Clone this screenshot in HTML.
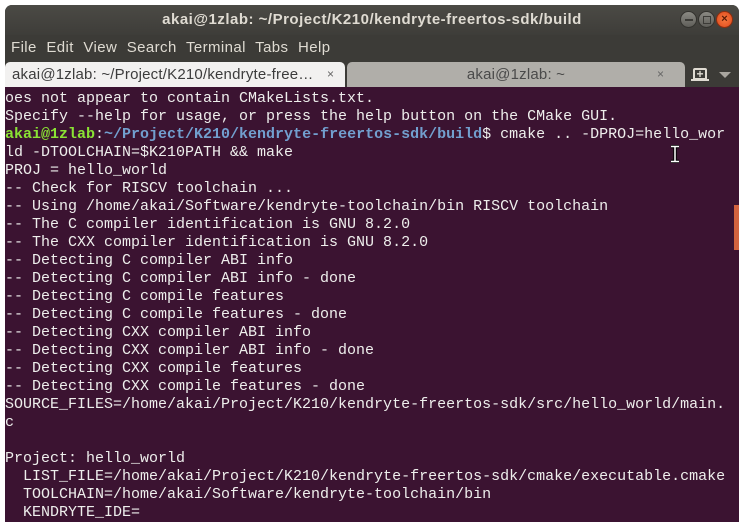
<!DOCTYPE html>
<html><head><meta charset="utf-8"><style>
*{margin:0;padding:0;box-sizing:border-box}
body{width:748px;height:530px;background:#fff;position:relative;overflow:hidden;font-family:"Liberation Sans","DejaVu Sans",sans-serif}
.win{position:absolute;left:5px;top:5px;width:734px;height:517px;background:#3c3b37;border-radius:7px 7px 0 0;overflow:hidden}
.title{position:absolute;left:0;top:0;width:734px;height:30px;background:linear-gradient(#4b4a45,#3e3d39);color:#dfdbd2;font-weight:bold;font-size:15px;letter-spacing:0.5px;text-align:center;line-height:30px}
.btn{position:absolute;top:6px;width:17px;height:17px;border-radius:50%;background:linear-gradient(#8a8983,#5f5e59);border:1px solid #33322e}
.menu{position:absolute;left:0;top:30px;width:734px;height:25px;background:#3c3b37;color:#dfdbd2;font-size:15px;letter-spacing:0.4px;line-height:25px;padding-left:6px;word-spacing:5px}
.tabs{position:absolute;left:0;top:55px;width:734px;height:27px;background:#3c3b37}
.tab{position:absolute;top:2px;height:25px;border-radius:5px 5px 0 0;font-size:15px;letter-spacing:0.2px;line-height:25px;color:#3c3c3c}
.term{position:absolute;left:0;top:82px;width:734px;height:435px;background:#3b1331;color:#eeeeec;font-family:"Liberation Mono","DejaVu Sans Mono",monospace;font-size:15px;line-height:18px;white-space:pre;padding-top:3px}
.g{color:#8ae234;font-weight:bold}.b{color:#729fcf;font-weight:bold}
</style></head><body>
<div class="win">
 <div class="title">akai@1zlab: ~/Project/K210/kendryte-freertos-sdk/build</div>
 <div class="btn" style="left:675px"><div style="position:absolute;left:4px;top:7px;width:8px;height:2px;background:#3c3b37"></div></div>
 <div class="btn" style="left:693px"><div style="position:absolute;left:4px;top:4px;width:8px;height:8px;border:1.5px solid #3c3b37"></div></div>
 <div class="btn" style="left:711px;background:radial-gradient(#f5793f,#e0491c);border-color:#8a2e10;color:#5a1a05;font-size:11px;line-height:15px;text-align:center;font-weight:bold">×</div>
 <div class="menu">File Edit View Search Terminal Tabs Help</div>
 <div class="tabs">
  <div class="tab" style="left:0;width:340px;background:#f2f1f0;padding-left:7px">akai@1zlab: ~/Project/K210/kendryte-free… <span style="position:absolute;left:322px;font-size:12px;color:#666">×</span></div>
  <div class="tab" style="left:342px;width:338px;background:#b0aea9;text-align:center;color:#4a4a4a">akai@1zlab: ~<span style="position:absolute;left:310px;font-size:12px;color:#666">×</span></div>
  <div style="position:absolute;left:688px;top:8px;width:14px;height:12px;border:2px solid #dfdbd2;border-radius:2px 2px 0 0;color:#dfdbd2;font-size:12px;line-height:8px;text-align:center;font-weight:bold">+</div>
  <div style="position:absolute;left:686px;top:19px;width:18px;height:2px;background:#dfdbd2"></div>
  <div style="position:absolute;left:714px;top:12px;width:0;height:0;border-left:6px solid transparent;border-right:6px solid transparent;border-top:6px solid #a9a69f"></div>
 </div>
 <div class="term">oes not appear to contain CMakeLists.txt.
Specify --help for usage, or press the help button on the CMake GUI.
<span class="g">akai@1zlab</span>:<span class="b">~/Project/K210/kendryte-freertos-sdk/build</span>$ cmake .. -DPROJ=hello_wor
ld -DTOOLCHAIN=$K210PATH &amp;&amp; make
PROJ = hello_world
-- Check for RISCV toolchain ...
-- Using /home/akai/Software/kendryte-toolchain/bin RISCV toolchain
-- The C compiler identification is GNU 8.2.0
-- The CXX compiler identification is GNU 8.2.0
-- Detecting C compiler ABI info
-- Detecting C compiler ABI info - done
-- Detecting C compile features
-- Detecting C compile features - done
-- Detecting CXX compiler ABI info
-- Detecting CXX compiler ABI info - done
-- Detecting CXX compile features
-- Detecting CXX compile features - done
SOURCE_FILES=/home/akai/Project/K210/kendryte-freertos-sdk/src/hello_world/main.
c

Project: hello_world
  LIST_FILE=/home/akai/Project/K210/kendryte-freertos-sdk/cmake/executable.cmake
  TOOLCHAIN=/home/akai/Software/kendryte-toolchain/bin
  KENDRYTE_IDE=</div>
 <div style="position:absolute;left:729px;top:200px;width:5px;height:45px;background:#d2633f"></div>
 <svg style="position:absolute;left:664px;top:140px" width="12" height="18" viewBox="0 0 12 18">
  <path d="M2 1.5H10M6 1.5V16.5M2 16.5H10" stroke="#000" stroke-width="3.5" fill="none"/>
  <path d="M2 1.5H10M6 1.5V16.5M2 16.5H10" stroke="#fff" stroke-width="1.5" fill="none"/>
 </svg>
</div>
</body></html>
